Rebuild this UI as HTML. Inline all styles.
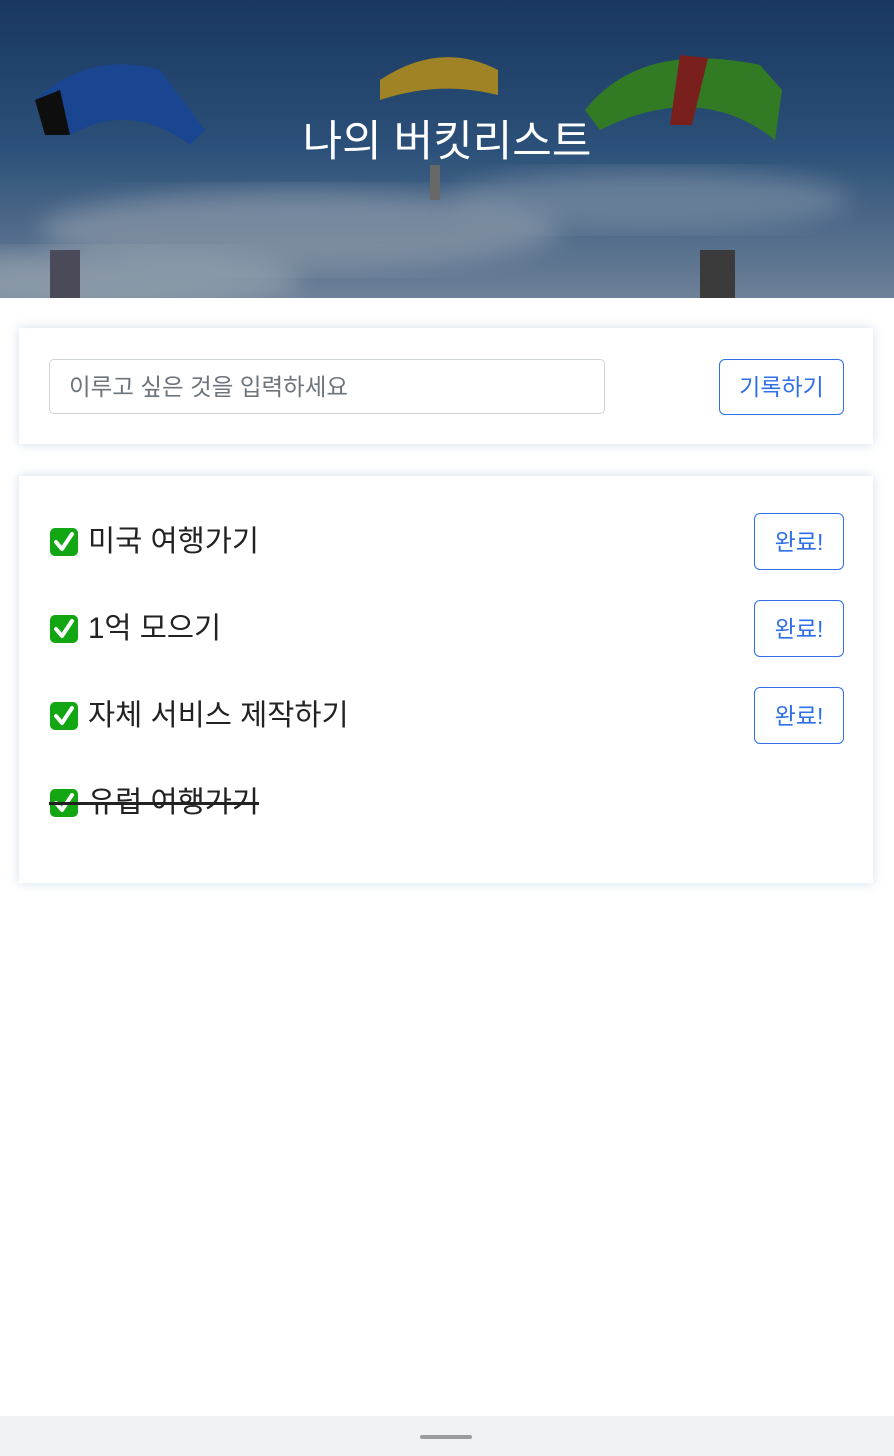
<!DOCTYPE html>
<html><head><meta charset="utf-8"><style>
*{box-sizing:border-box;margin:0;padding:0}
body{width:894px;height:1456px;background:#fff;font-family:"Liberation Sans","Noto Sans CJK KR",sans-serif;position:relative;overflow:hidden;color:#222}
.banner{position:absolute;left:0;top:0;width:894px;height:298px;overflow:hidden}
.title{position:absolute;left:0;right:0;top:114px;text-align:center;color:#fff;font-size:43px;line-height:56px}
.card{position:absolute;left:19px;width:854px;background:#fff;box-shadow:0 0 10px rgba(100,150,190,.3)}
.input{position:absolute;left:30px;top:31px;width:556px;height:55px;border:1.5px solid #ced4da;border-radius:5px;font-size:23.5px;color:#6c757d;padding-left:19px;line-height:55px}
.btn{position:absolute;border:1.5px solid #2f6fe8;border-radius:6px;color:#2f6fe8;font-size:23px;text-align:center;background:#fff}
.item{position:absolute;left:30px;font-size:29.5px;line-height:40px;display:flex;align-items:center;color:#222}
.item svg{margin-right:9px}
.bar{position:absolute;left:0;top:1416px;width:894px;height:40px;background:#f1f2f4}
.bar div{position:absolute;left:420px;top:19px;width:52px;height:4px;border-radius:2px;background:#9a9ca0}
</style></head><body>
<div class="banner">
<svg width="894" height="298" viewBox="0 0 894 298">
<defs><linearGradient id="sky" x1="0" y1="0" x2="0" y2="1"><stop offset="0" stop-color="#1d3f6e"/><stop offset=".5" stop-color="#325c8a"/><stop offset="1" stop-color="#7d93ad"/></linearGradient>
<filter id="b"><feGaussianBlur stdDeviation="12"/></filter></defs>
<rect width="894" height="298" fill="url(#sky)"/>
<ellipse cx="300" cy="230" rx="260" ry="40" fill="#a9b6c6" opacity=".6" filter="url(#b)"/>
<ellipse cx="650" cy="200" rx="200" ry="30" fill="#9fb0c4" opacity=".5" filter="url(#b)"/>
<ellipse cx="100" cy="280" rx="200" ry="30" fill="#b7c2cf" opacity=".6" filter="url(#b)"/>
<path d="M35 100 Q90 50 160 70 L205 130 L190 145 Q130 100 70 135 Z" fill="#1e4fa6"/>
<path d="M35 100 L45 135 L70 135 L60 90 Z" fill="#111"/>
<path d="M380 80 Q440 40 498 70 L498 95 Q440 80 380 100 Z" fill="#b5962a"/>
<path d="M585 110 Q640 40 760 65 L782 90 L775 140 Q700 80 600 130 Z" fill="#3a8c2a"/>
<path d="M680 55 L708 58 L692 125 L670 125 Z" fill="#8a2420"/>
<rect x="430" y="165" width="10" height="35" fill="#777"/>
<rect x="50" y="250" width="30" height="48" fill="#556"/>
<rect x="700" y="250" width="35" height="48" fill="#444"/>
<rect width="894" height="298" fill="#000" opacity=".12"/>
</svg>
<div class="title">나의 버킷리스트</div>
</div>

<div class="card" style="top:328px;height:116px">
<div class="input">이루고 싶은 것을 입력하세요</div>
<div class="btn" style="left:700px;top:31px;width:125px;height:56px;line-height:55px">기록하기</div>
</div>

<div class="card" style="top:476px;height:407px">
<div class="item" style="top:46px"><svg width="30" height="30" viewBox="0 0 30 30"><rect x="1" y="1" width="28" height="28" rx="5" fill="#12a612"/><path d="M7 15 L13 22 L23 7" stroke="#fff" stroke-width="4" fill="none" stroke-linecap="round" stroke-linejoin="round"/></svg>미국 여행가기</div>
<div class="btn" style="left:735px;top:37px;width:90px;height:57px;line-height:57px">완료!</div>
<div class="item" style="top:133px"><svg width="30" height="30" viewBox="0 0 30 30"><rect x="1" y="1" width="28" height="28" rx="5" fill="#12a612"/><path d="M7 15 L13 22 L23 7" stroke="#fff" stroke-width="4" fill="none" stroke-linecap="round" stroke-linejoin="round"/></svg>1억 모으기</div>
<div class="btn" style="left:735px;top:124px;width:90px;height:57px;line-height:57px">완료!</div>
<div class="item" style="top:220px"><svg width="30" height="30" viewBox="0 0 30 30"><rect x="1" y="1" width="28" height="28" rx="5" fill="#12a612"/><path d="M7 15 L13 22 L23 7" stroke="#fff" stroke-width="4" fill="none" stroke-linecap="round" stroke-linejoin="round"/></svg>자체 서비스 제작하기</div>
<div class="btn" style="left:735px;top:211px;width:90px;height:57px;line-height:57px">완료!</div>
<div class="item" style="top:307px"><svg width="30" height="30" viewBox="0 0 30 30"><rect x="1" y="1" width="28" height="28" rx="5" fill="#12a612"/><path d="M7 15 L13 22 L23 7" stroke="#fff" stroke-width="4" fill="none" stroke-linecap="round" stroke-linejoin="round"/></svg>유럽 여행가기<div style="position:absolute;left:0;right:0;top:19px;height:3px;background:#222"></div></div>
</div>

<div class="bar"><div></div></div>
</body></html>
